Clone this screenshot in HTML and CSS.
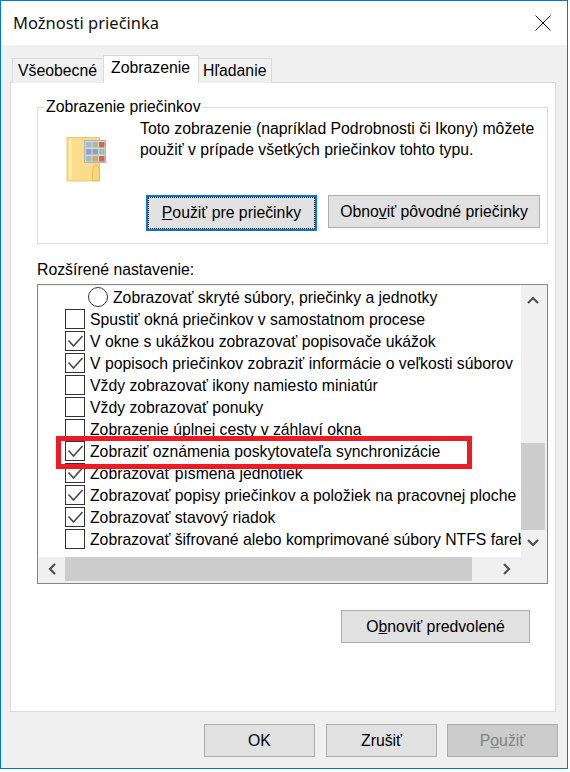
FILE: index.html
```html
<!DOCTYPE html>
<html lang="sk">
<head>
<meta charset="utf-8">
<title>Možnosti priečinka</title>
<link rel="stylesheet" href="styles.css">
</head>
<body>
<div class="dialog">
  <header class="titlebar">
    <span class="title">Možnosti priečinka</span>
    <svg class="close" width="16" height="16" viewBox="0 0 16 16"><path d="M.5.5l15 15M15.500.5l-15 15" stroke="#111" fill="none"/></svg>
  </header>
  <div class="content">
    <div class="tabs">
      <span class="tab tab-first">Všeobecné</span>
      <span class="tab tab-active">Zobrazenie</span>
      <span class="tab tab-last">Hľadanie</span>
    </div>
    <section class="panel">
      <fieldset class="group">
        <legend class="legend">Zobrazenie priečinkov</legend>
        <div class="group-top">
          <svg class="folder" width="42" height="46" viewBox="0 0 42 46">
            <path d="M1 1.500h32.500v43.500H1z" fill="#fbdc8a" stroke="#e5c877"/>
            <path d="M3 3h2.500v40.500H3z" fill="#ffefb5"/>
            <path d="M26.500 44.500V35c0-3 2-5.500 3.500-6.500 1.500 1 3.500 3.500 3.500 6.500v9.500z" fill="#f9d677" stroke="#e3bd5c"/>
            <path d="M18.500 4.500h21v22h-21z" fill="#d8d8d8" stroke="#b0b0b0"/>
            <rect x="20" y="6" width="5.500" height="5.500" fill="#9dbbd6"/><rect x="26.500" y="6" width="5.500" height="5.500" fill="#aabd8e"/><rect x="33" y="6" width="5.500" height="5.500" fill="#cf6a52"/>
            <rect x="20" y="13" width="5.500" height="5.500" fill="#9a9dc0"/><rect x="26.500" y="13" width="5.500" height="5.500" fill="#7fa8cf"/><rect x="33" y="13" width="5.500" height="5.500" fill="#a3bf9f"/>
            <rect x="20" y="20" width="5.500" height="5.500" fill="#9dbbd6"/><rect x="26.500" y="20" width="5.500" height="5.500" fill="#d6a860"/><rect x="33" y="20" width="5.500" height="5.500" fill="#cf6a52"/>
          </svg>
          <p class="group-text">Toto zobrazenie (napríklad Podrobnosti či Ikony) môžete použiť v prípade všetkých priečinkov tohto typu.</p>
        </div>
        <div class="group-buttons">
          <button class="btn btn-focus"><span class="focus-inner"><u>P</u>oužiť pre priečinky</span></button>
          <button class="btn btn-restore">Obno<u>v</u>iť pôvodné priečinky</button>
        </div>
      </fieldset>
      <div class="list-label">Rozšírené nastavenie:</div>
      <div class="listbox">
        <div class="list-main">
          <ul class="rows">
            <li class="row row-radio"><span class="radio"></span><span class="row-text">Zobrazovať skryté súbory, priečinky a jednotky</span></li>
            <li class="row"><span class="cb"></span><span class="row-text">Spustiť okná priečinkov v samostatnom procese</span></li>
            <li class="row"><span class="cb"><svg class="tick" viewBox="0 0 18 18"><path d="M2.500 8.500l5 5.500 9-10" /></svg></span><span class="row-text">V okne s ukážkou zobrazovať popisovače ukážok</span></li>
            <li class="row"><span class="cb"><svg class="tick" viewBox="0 0 18 18"><path d="M2.500 8.500l5 5.500 9-10" /></svg></span><span class="row-text">V popisoch priečinkov zobraziť informácie o veľkosti súborov</span></li>
            <li class="row"><span class="cb"></span><span class="row-text">Vždy zobrazovať ikony namiesto miniatúr</span></li>
            <li class="row"><span class="cb"></span><span class="row-text">Vždy zobrazovať ponuky</span></li>
            <li class="row"><span class="cb"></span><span class="row-text">Zobrazenie úplnej cesty v záhlaví okna</span></li>
            <li class="row"><span class="cb"><svg class="tick" viewBox="0 0 18 18"><path d="M2.500 8.500l5 5.500 9-10" /></svg></span><span class="row-text">Zobraziť oznámenia poskytovateľa synchronizácie</span></li>
            <li class="row"><span class="cb"><svg class="tick" viewBox="0 0 18 18"><path d="M2.500 8.500l5 5.500 9-10" /></svg></span><span class="row-text">Zobrazovať písmená jednotiek</span></li>
            <li class="row"><span class="cb"><svg class="tick" viewBox="0 0 18 18"><path d="M2.500 8.500l5 5.500 9-10" /></svg></span><span class="row-text">Zobrazovať popisy priečinkov a položiek na pracovnej ploche</span></li>
            <li class="row"><span class="cb"><svg class="tick" viewBox="0 0 18 18"><path d="M2.500 8.500l5 5.500 9-10" /></svg></span><span class="row-text">Zobrazovať stavový riadok</span></li>
            <li class="row"><span class="cb"></span><span class="row-text">Zobrazovať šifrované alebo komprimované súbory NTFS farebne</span></li>
          </ul>
          <div class="vscroll">
            <svg class="arrow" width="12" height="8" viewBox="0 0 12 8"><path d="M1 7l5-5 5 5" /></svg>
            <div class="vthumb"></div>
            <svg class="arrow" width="12" height="8" viewBox="0 0 12 8"><path d="M1 1l5 5 5-5" /></svg>
          </div>
        </div>
        <div class="hscroll">
          <svg class="arrow arrow-left" width="8" height="12" viewBox="0 0 8 12"><path d="M7 1L2 6l5 5" /></svg>
          <div class="hthumb"></div>
          <svg class="arrow arrow-right" width="8" height="12" viewBox="0 0 8 12"><path d="M1 1l5 5-5 5" /></svg>
        </div>
        <div class="highlight"></div>
      </div>
      <div class="restore-row">
        <button class="btn btn-defaults">O<u>b</u>noviť predvolené</button>
      </div>
    </section>
    <footer class="footer">
      <button class="btn btn-foot">OK</button>
      <button class="btn btn-foot">Zrušiť</button>
      <button class="btn btn-foot btn-disabled">P<u>o</u>užiť</button>
    </footer>
  </div>
</div>
</body>
</html>
```
FILE: styles.css
```css
* { box-sizing: border-box; }
html, body { margin: 0; padding: 0; background: #fff; }
body { font: 15.800px/20px "Liberation Sans", Arial, sans-serif; color: #000; }

.dialog {
  width: 568px;
  height: 769px;
  border: 1px solid #0078d7;
  display: flex;
  flex-direction: column;
}
.titlebar {
  height: 44px;
  flex: none;
  background: #fff;
  display: flex;
  align-items: center;
  justify-content: space-between;
  padding: 0 16px 0 12px;
}
.title { font: 16.500px/22px "Noto Sans", "Open Sans", sans-serif; color: #111; }
.close { display: block; }

.content {
  flex: 1;
  background: #f0f0f0;
  padding: 10px 11px 0 9px;
  display: flex;
  flex-direction: column;
}
.tabs { display: flex; align-items: flex-end; height: 28px; padding-left: 2px; position: relative; z-index: 1; margin-bottom: -1px; }
.tab {
  background: #f0f0f0;
  border: 1px solid #d9d9d9;
  border-bottom: 0;
  height: 25px;
  padding: 2px 5px 0 5px;
  white-space: nowrap;
}
.tab-first { width: 92px; }
.tab-active { position: relative; z-index: 1; width: 96px; height: 28px; background: #fff; padding: 2px 7px 0; margin-left: -1px; }
.tab-last { width: 74px; margin-left: -1px; border-left: 0; }

.panel {
  width: 546px;
  height: 630px;
  background: #fff;
  border: 1px solid #d9d9d9;
  padding: 15px 6px 0 26px;
}
.group {
  margin: 0;
  width: 511px;
  height: 146px;
  border: 1px solid #dcdcdc;
  padding: 0 7px 0 0;
  display: flex;
  flex-direction: column;
}
.legend { padding: 0 1px; margin-left: 7px; line-height: 18px; }
.group-top { display: flex; height: 79px; }
.folder { flex: none; margin: 20px 0 0 28px; display: block; }
.group-text { margin: 3px 0 0 32px; line-height: 20.500px; }
.group-buttons { display: flex; align-items: flex-start; margin-left: 108px; gap: 11px; }

.btn {
  font: inherit;
  color: #000;
  background: #e1e1e1;
  border: 1px solid #adadad;
  padding: 0;
  height: 33px;
  display: block;
  text-align: center;
}
.btn-focus { width: 171px; height: 36px; border: 2px solid #0078d7; padding: 0; }
.focus-inner { display: block; height: 100%; line-height: 30px; border: 1px dotted #000; }
.btn-restore { width: 212px; }

.list-label { margin-top: 16px; line-height: 20px; }
.listbox {
  position: relative;
  margin-top: 4px;
  width: 511px;
  height: 300px;
  border: 1px solid #858585;
  background: #f0f0f0;
  padding: 1px 2px 1px 1px;
  display: flex;
  flex-direction: column;
}
.list-main { display: flex; height: 271px; flex: none; }
.rows {
  list-style: none;
  margin: 0;
  padding: 0;
  width: 482px;
  height: 271px;
  background: #fff;
  overflow: hidden;
  font-size: 15.750px;
}
.row { display: flex; align-items: center; height: 22px; padding-left: 26px; white-space: nowrap; }
.row-radio { padding-left: 49px; }
.cb { flex: none; width: 20px; height: 20px; border: 1px solid #333; background: #fff; margin-right: 5px; display: block; }
.radio { flex: none; width: 20px; height: 20px; border: 1px solid #333; border-radius: 50%; margin-right: 5px; }
.tick { display: block; width: 18px; height: 18px; fill: none; stroke: #4a4a4a; stroke-width: 1.600; }
.row-text { display: block; padding-top: 2px; }

.vscroll { width: 24px; height: 271px; position: relative; display: flex; flex-direction: column; align-items: center; padding-top: 10px; }
.vthumb { position: absolute; left: 0; top: 157px; width: 24px; height: 87px; background: #cdcdcd; }
.vscroll .arrow:last-child { position: absolute; top: 253px; left: 6px; }
.hscroll { height: 24px; width: 506px; display: flex; align-items: center; flex: none; }
.hthumb { width: 407px; height: 24px; background: #cdcdcd; margin-left: 9px; }
.arrow { flex: none; display: block; fill: none; stroke: #505050; stroke-width: 2.200; }
.arrow-left { margin-left: 9px; }
.arrow-right { margin-left: 31px; }

.highlight {
  position: absolute;
  left: 18px;
  top: 151px;
  width: 416px;
  height: 33px;
  border: 5px solid #ed1c24;
  pointer-events: none;
}

.restore-row { display: flex; justify-content: flex-end; margin-top: 26px; padding-right: 19px; }
.btn-defaults { width: 189px; }

.footer { display: flex; justify-content: flex-end; gap: 11px; padding-top: 12px; margin-right: -2px; }
.footer .btn-foot:last-child { margin-left: -1px; }
.btn-foot { width: 111px; }
.btn-disabled { background: #ccc; color: #838383; }
```
